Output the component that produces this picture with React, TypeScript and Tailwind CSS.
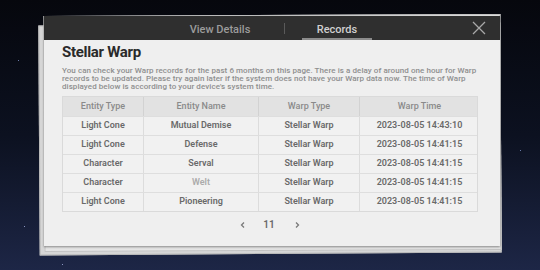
import React from "react";

const rows = [
  ["Light Cone", "Mutual Demise", "Stellar Warp", "2023-08-05 14:43:10"],
  ["Light Cone", "Defense", "Stellar Warp", "2023-08-05 14:41:15"],
  ["Character", "Serval", "Stellar Warp", "2023-08-05 14:41:15"],
  ["Character", "Welt", "Stellar Warp", "2023-08-05 14:41:15"],
  ["Light Cone", "Pioneering", "Stellar Warp", "2023-08-05 14:41:15"],
];

const cols = "grid grid-cols-[81px_115px_101px_119px]";

export default function App() {
  return (
    <div
      className="relative w-[540px] h-[270px] overflow-hidden bg-gradient-to-b from-[#06070d] via-[#0c1120] to-[#1d2646]"
      style={{ fontFamily: "Roboto, 'Noto Sans', sans-serif" }}
    >
      {/* stars */}
      <div className="absolute left-[18px] top-[60px] w-[1px] h-[1px] bg-[#6a7aa8]" />
      <div className="absolute left-[24px] top-[226px] w-[1px] h-[1px] bg-[#8a96c0]" />
      <div className="absolute left-[62px] top-[264px] w-[1px] h-[1px] bg-[#8a96c0]" />
      <div className="absolute left-[520px] top-[150px] w-[1px] h-[1px] bg-[#6a7aa8]" />

      {/* stacked back sheets */}
      <div className="absolute left-[39px] top-[24px] w-[462px] h-[230px] bg-[#d6d6d6] border border-[#b8b8b8] rotate-[-0.35deg]" />
      <div className="absolute left-[44px] top-[15px] w-[457px] h-[236px] bg-[#e4e4e4] border border-[#c2c2c2] rotate-[-0.25deg]" />

      <div className="relative pt-[16px] pl-[44px]">
        <div className="w-[456px] h-[230px] flex flex-col shadow-[0_1px_2px_rgba(0,0,0,0.4)]">
          {/* header */}
          <div className="relative h-[24px] bg-[#2f2f2f] flex items-center shrink-0">
            <div className="ml-[141px] w-[70px] text-center text-[11px] font-medium text-[#9c9c9c] leading-none pt-[2px]">
              View Details
            </div>
            <div className="ml-[29px] w-[1px] h-[11px] bg-[#5a5a5a]" />
            <div className="relative ml-[17px] w-[70px] h-full flex items-center justify-center">
              <span className="text-[11px] font-medium text-[#cfcfcf] leading-none pt-[2px]">Records</span>
              <div className="absolute left-0 right-0 bottom-0 h-[2px] bg-[#8c8c8c]" />
            </div>
            <svg
              className="absolute left-[428px] top-[5px]"
              width="14"
              height="14"
              viewBox="0 0 14 14"
            >
              <path d="M1 1 L13 13 M13 1 L1 13" stroke="#a8a8a8" strokeWidth="1.3" fill="none" />
            </svg>
          </div>

          {/* body */}
          <div className="flex-1 bg-[#efefef] pl-[18px] pr-[22px] pt-[3px] flex flex-col">
            <div className="text-[15px] font-bold text-[#2a2a2a] leading-[18px] tracking-[-0.3px]">
              Stellar Warp
            </div>
            <p className="mt-[6px] text-[8px] leading-[8px] tracking-[0.07px] text-[#8e8e8e] font-medium whitespace-nowrap">
              You can check your Warp records for the past 6 months on this page. There is a delay of around one hour for Warp
              <br />
              records to be updated. Please try again later if the system does not have your Warp data now. The time of Warp
              <br />
              displayed below is according to your device's system time.
            </p>

            <div className="mt-[5px] w-[416px] border border-[#dadada] text-[9px]">
              <div className={`${cols} h-[19px] bg-[#e2e2e2] text-[#8a8a8a] font-medium`}>
                {["Entity Type", "Entity Name", "Warp Type", "Warp Time"].map((h, i) => (
                  <div
                    key={h}
                    className={`flex items-center justify-center ${i < 3 ? "border-r border-[#d2d2d2]" : ""}`}
                  >
                    {h}
                  </div>
                ))}
              </div>
              {rows.map((r, ri) => (
                <div key={ri} className={`${cols} h-[19px] border-t border-[#dedede] bg-[#f1f1f1] font-semibold text-[#6a6a6a]`}>
                  {r.map((c, i) => (
                    <div
                      key={i}
                      className={`flex items-center justify-center ${i < 3 ? "border-r border-[#dcdcdc]" : ""} ${
                        c === "Welt" ? "text-[#ababab]" : ""
                      }`}
                    >
                      {c}
                    </div>
                  ))}
                </div>
              ))}
            </div>

            <div className="mt-[8px] w-[416px] flex items-center justify-center text-[#6a6a6a]">
              <svg width="8" height="8" viewBox="0 0 8 8" className="mr-[16px]">
                <path d="M5 1.5 L2.5 4 L5 6.5" stroke="#7a7a7a" strokeWidth="1.3" fill="none" />
              </svg>
              <span className="text-[10px] font-semibold leading-none">11</span>
              <svg width="8" height="8" viewBox="0 0 8 8" className="ml-[18px]">
                <path d="M3 1.5 L5.5 4 L3 6.5" stroke="#7a7a7a" strokeWidth="1.3" fill="none" />
              </svg>
            </div>
          </div>
        </div>
      </div>
    </div>
  );
}
